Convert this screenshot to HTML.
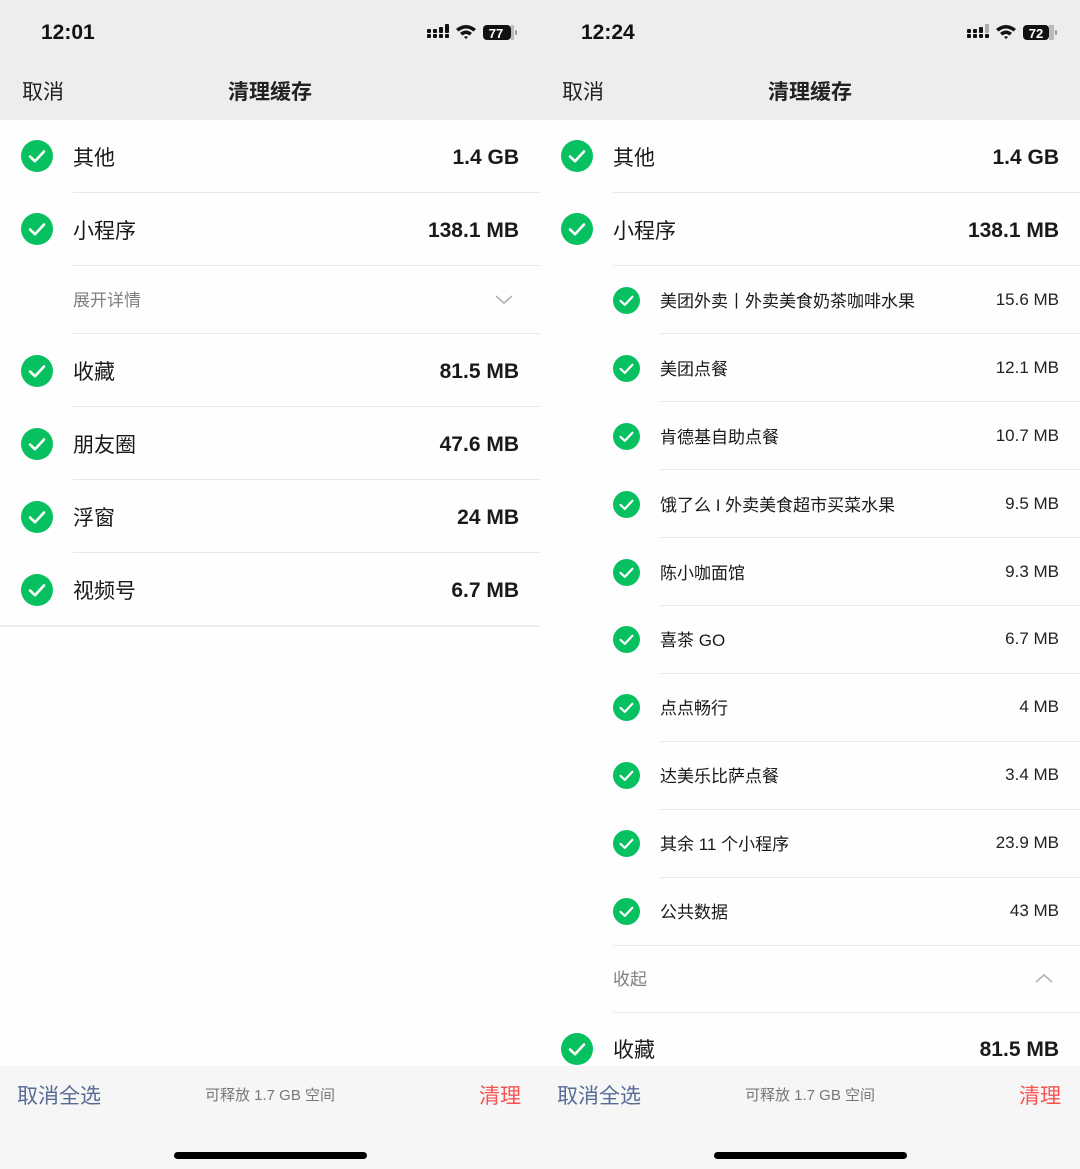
<!DOCTYPE html>
<html><head><meta charset="utf-8"><style>
*{margin:0;padding:0;box-sizing:border-box}
body{width:1080px;height:1169px;background:#fff;font-family:"Liberation Sans","Noto Sans CJK SC",sans-serif;color:#191919;position:relative;overflow:hidden}
.p{position:absolute;top:0;width:540px;height:1169px;background:#fefefe;overflow:hidden}
.hd{position:absolute;left:0;top:0;width:540px;height:120px;background:#ededed}
.tm{position:absolute;left:41px;top:21px;font-size:21px;font-weight:bold;color:#111}
.cx{position:absolute;left:22px;top:76px;font-size:21px;color:#222}
.tt{position:absolute;left:0;width:540px;text-align:center;top:76px;font-size:21px;font-weight:bold;color:#222}
.a{position:absolute;white-space:nowrap}
.l{font-size:21px;color:#1a1a1a;left:73px}
.v{font-size:21px;font-weight:bold;color:#1a1a1a;right:21px;margin-top:2px}
.sl{font-size:17px;color:#1a1a1a;left:120px;margin-top:-2px}
.sv{font-size:17px;color:#222;right:21px}
.g{font-size:17px;color:#808080;left:73px;margin-top:-2px}
.ln{position:absolute;height:1px;background:#e8e8e8;right:0}
.c{position:absolute}
.bb{position:absolute;left:0;top:1066px;width:540px;height:103px;background:#f6f6f6}
.bb .q{position:absolute;left:17px;top:14px;font-size:21px;color:#576b95}
.bb .m{position:absolute;left:0;width:540px;text-align:center;top:18px;font-size:15px;color:#777}
.bb .r{position:absolute;right:19px;top:14px;font-size:21px;color:#fa5151}
.bb .h{position:absolute;left:174px;top:86px;width:193px;height:7px;border-radius:4px;background:#000}
</style></head><body>
<svg width="0" height="0" style="position:absolute"><defs><g id="ck"><circle cx="16" cy="16" r="16" fill="#07c160"/><path d="M9 16.5 L14 21.2 L23 11.5" stroke="#fff" stroke-width="2.6" fill="none" stroke-linecap="round" stroke-linejoin="round"/></g></defs></svg>

<!-- LEFT -->
<div class="p" style="left:0">
<div class="hd"></div>
<div class="tm">12:01</div>
<svg class="c" style="left:426px;top:24px" width="94" height="18" viewBox="0 0 94 18">
<g fill="#111"><rect x="1" y="10" width="4" height="4" rx="1"/><rect x="1" y="5" width="4" height="4" rx="1"/><rect x="7" y="10" width="4" height="4" rx="1"/><rect x="7" y="5" width="4" height="4" rx="1"/><rect x="13" y="10" width="4" height="4" rx="1"/><rect x="13" y="3" width="4" height="6" rx="1"/><rect x="19" y="10" width="4" height="4" rx="1"/><rect x="19" y="0" width="4" height="9" rx="1"/>
<path d="M30 5 Q40 -3 50 5 L47.5 7.5 Q40 1.5 32.5 7.5Z"/><path d="M34 9 Q40 4 46 9 L43.5 11.5 Q40 8.5 36.5 11.5Z"/><path d="M38 13 L40 15 L42 13 Q40 11.5 38 13Z"/>
<rect x="57" y="1" width="28" height="15" rx="4"/><rect x="85" y="1" width="3" height="15" fill="#bbb"/><rect x="89" y="6" width="2" height="5" rx="1" fill="#999"/></g>
<text x="70" y="14" font-size="13" font-weight="bold" fill="#fff" text-anchor="middle" font-family="Liberation Sans">77</text></svg>
<div class="cx">取消</div><div class="tt">清理缓存</div>

<svg class="c" style="left:21px;top:140px" width="32" height="32"><use href="#ck"/></svg>
<div class="a l" style="top:142px">其他</div><div class="a v" style="top:144px">1.4 GB</div>
<div class="ln" style="left:73px;top:192px"></div>
<svg class="c" style="left:21px;top:213px" width="32" height="32"><use href="#ck"/></svg>
<div class="a l" style="top:215px">小程序</div><div class="a v" style="top:217px">138.1 MB</div>
<div class="ln" style="left:73px;top:265px"></div>
<div class="a g" style="top:288px">展开详情</div>
<svg class="c" style="left:494px;top:294px" width="20" height="12"><path d="M2 2 L10 9 L18 2" stroke="#b2b2b2" stroke-width="1.6" fill="none"/></svg>
<div class="ln" style="left:73px;top:333px"></div>
<svg class="c" style="left:21px;top:355px" width="32" height="32"><use href="#ck"/></svg>
<div class="a l" style="top:356px">收藏</div><div class="a v" style="top:358px">81.5 MB</div>
<div class="ln" style="left:73px;top:406px"></div>
<svg class="c" style="left:21px;top:428px" width="32" height="32"><use href="#ck"/></svg>
<div class="a l" style="top:429px">朋友圈</div><div class="a v" style="top:431px">47.6 MB</div>
<div class="ln" style="left:73px;top:479px"></div>
<svg class="c" style="left:21px;top:501px" width="32" height="32"><use href="#ck"/></svg>
<div class="a l" style="top:502px">浮窗</div><div class="a v" style="top:504px">24 MB</div>
<div class="ln" style="left:73px;top:552px"></div>
<svg class="c" style="left:21px;top:574px" width="32" height="32"><use href="#ck"/></svg>
<div class="a l" style="top:575px">视频号</div><div class="a v" style="top:577px">6.7 MB</div>
<div class="ln" style="left:0;top:625px;height:2px;background:#ececec"></div>

<div class="bb"><div class="q">取消全选</div><div class="m">可释放 1.7 GB 空间</div><div class="r">清理</div><div class="h"></div></div>
</div>

<!-- RIGHT -->
<div class="p" style="left:540px">
<div class="hd"></div>
<div class="tm">12:24</div>
<svg class="c" style="left:426px;top:24px" width="94" height="18" viewBox="0 0 94 18">
<g fill="#111"><rect x="1" y="10" width="4" height="4" rx="1"/><rect x="1" y="5" width="4" height="4" rx="1"/><rect x="7" y="10" width="4" height="4" rx="1"/><rect x="7" y="5" width="4" height="4" rx="1"/><rect x="13" y="10" width="4" height="4" rx="1"/><rect x="13" y="3" width="4" height="6" rx="1"/><rect x="19" y="10" width="4" height="4" rx="1"/><rect x="19" y="0" width="4" height="9" rx="1" fill="#aaa"/>
<path d="M30 5 Q40 -3 50 5 L47.5 7.5 Q40 1.5 32.5 7.5Z"/><path d="M34 9 Q40 4 46 9 L43.5 11.5 Q40 8.5 36.5 11.5Z"/><path d="M38 13 L40 15 L42 13 Q40 11.5 38 13Z"/>
<rect x="57" y="1" width="26" height="15" rx="4"/><rect x="83" y="1" width="5" height="15" fill="#bbb"/><rect x="89" y="6" width="2" height="5" rx="1" fill="#999"/></g>
<text x="70" y="14" font-size="13" font-weight="bold" fill="#fff" text-anchor="middle" font-family="Liberation Sans">72</text></svg>
<div class="cx">取消</div><div class="tt">清理缓存</div>

<svg class="c" style="left:21px;top:140px" width="32" height="32"><use href="#ck"/></svg>
<div class="a l" style="top:142px">其他</div><div class="a v" style="top:144px">1.4 GB</div>
<div class="ln" style="left:73px;top:192px"></div>
<svg class="c" style="left:21px;top:213px" width="32" height="32"><use href="#ck"/></svg>
<div class="a l" style="top:215px">小程序</div><div class="a v" style="top:217px">138.1 MB</div>
<div class="ln" style="left:73px;top:265px"></div>

<svg class="c" style="left:73px;top:287px" width="27" height="27" viewBox="0 0 32 32"><use href="#ck"/></svg>
<div class="a sl" style="top:289px">美团外卖丨外卖美食奶茶咖啡水果</div><div class="a sv" style="top:290px">15.6 MB</div>
<div class="ln" style="left:120px;top:333px"></div>
<svg class="c" style="left:73px;top:355px" width="27" height="27" viewBox="0 0 32 32"><use href="#ck"/></svg>
<div class="a sl" style="top:357px">美团点餐</div><div class="a sv" style="top:358px">12.1 MB</div>
<div class="ln" style="left:120px;top:401px"></div>
<svg class="c" style="left:73px;top:423px" width="27" height="27" viewBox="0 0 32 32"><use href="#ck"/></svg>
<div class="a sl" style="top:425px">肯德基自助点餐</div><div class="a sv" style="top:426px">10.7 MB</div>
<div class="ln" style="left:120px;top:469px"></div>
<svg class="c" style="left:73px;top:491px" width="27" height="27" viewBox="0 0 32 32"><use href="#ck"/></svg>
<div class="a sl" style="top:493px">饿了么 I 外卖美食超市买菜水果</div><div class="a sv" style="top:494px">9.5 MB</div>
<div class="ln" style="left:120px;top:537px"></div>
<svg class="c" style="left:73px;top:559px" width="27" height="27" viewBox="0 0 32 32"><use href="#ck"/></svg>
<div class="a sl" style="top:561px">陈小咖面馆</div><div class="a sv" style="top:562px">9.3 MB</div>
<div class="ln" style="left:120px;top:605px"></div>
<svg class="c" style="left:73px;top:626px" width="27" height="27" viewBox="0 0 32 32"><use href="#ck"/></svg>
<div class="a sl" style="top:628px">喜茶 GO</div><div class="a sv" style="top:629px">6.7 MB</div>
<div class="ln" style="left:120px;top:673px"></div>
<svg class="c" style="left:73px;top:694px" width="27" height="27" viewBox="0 0 32 32"><use href="#ck"/></svg>
<div class="a sl" style="top:696px">点点畅行</div><div class="a sv" style="top:697px">4 MB</div>
<div class="ln" style="left:120px;top:741px"></div>
<svg class="c" style="left:73px;top:762px" width="27" height="27" viewBox="0 0 32 32"><use href="#ck"/></svg>
<div class="a sl" style="top:764px">达美乐比萨点餐</div><div class="a sv" style="top:765px">3.4 MB</div>
<div class="ln" style="left:120px;top:809px"></div>
<svg class="c" style="left:73px;top:830px" width="27" height="27" viewBox="0 0 32 32"><use href="#ck"/></svg>
<div class="a sl" style="top:832px">其余 11 个小程序</div><div class="a sv" style="top:833px">23.9 MB</div>
<div class="ln" style="left:120px;top:877px"></div>
<svg class="c" style="left:73px;top:898px" width="27" height="27" viewBox="0 0 32 32"><use href="#ck"/></svg>
<div class="a sl" style="top:900px">公共数据</div><div class="a sv" style="top:901px">43 MB</div>
<div class="ln" style="left:73px;top:945px"></div>
<div class="a g" style="top:967px">收起</div>
<svg class="c" style="left:494px;top:972px" width="20" height="12"><path d="M2 10 L10 3 L18 10" stroke="#b2b2b2" stroke-width="1.6" fill="none"/></svg>
<div class="ln" style="left:73px;top:1012px"></div>
<svg class="c" style="left:21px;top:1033px" width="32" height="32"><use href="#ck"/></svg>
<div class="a l" style="top:1034px">收藏</div><div class="a v" style="top:1036px">81.5 MB</div>

<div class="bb"><div class="q">取消全选</div><div class="m">可释放 1.7 GB 空间</div><div class="r">清理</div><div class="h"></div></div>
</div>
</body></html>
